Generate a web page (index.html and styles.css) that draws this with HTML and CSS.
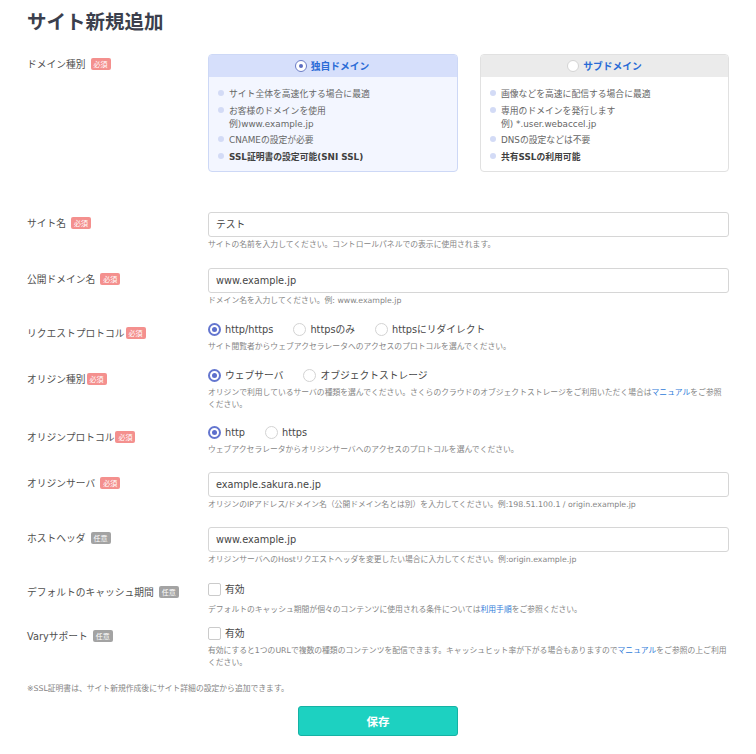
FILE: index.html
```html
<!DOCTYPE html>
<html lang="ja">
<head>
<meta charset="utf-8">
<title>サイト新規追加</title>
<link rel="stylesheet" href="styles.css">
</head>
<body>
<div class="page">
  <h1 class="title">サイト新規追加</h1>

  <div class="row row-domain">
    <div class="label label-tight">ドメイン種別<span class="badge req">必須</span></div>
    <div class="field">
      <div class="cards">
        <div class="card card-on">
          <div class="card-head"><span class="hradio on"></span>独自ドメイン</div>
          <ul class="card-list">
            <li>サイト全体を高速化する場合に最適</li>
            <li>お客様のドメインを使用<br>例)www.example.jp</li>
            <li>CNAMEの設定が必要</li>
            <li class="strong">SSL証明書の設定可能(SNI SSL)</li>
          </ul>
        </div>
        <div class="card card-off">
          <div class="card-head"><span class="hradio"></span>サブドメイン</div>
          <ul class="card-list">
            <li>画像などを高速に配信する場合に最適</li>
            <li>専用のドメインを発行します<br>例) *.user.webaccel.jp</li>
            <li>DNSの設定などは不要</li>
            <li class="strong">共有SSLの利用可能</li>
          </ul>
        </div>
      </div>
    </div>
  </div>

  <div class="row row-site">
    <div class="label">サイト名<span class="badge req">必須</span></div>
    <div class="field">
      <div class="input">テスト</div>
      <p class="help">サイトの名前を入力してください。コントロールパネルでの表示に使用されます。</p>
    </div>
  </div>

  <div class="row row-pub">
    <div class="label">公開ドメイン名<span class="badge req">必須</span></div>
    <div class="field">
      <div class="input">www.example.jp</div>
      <p class="help">ドメイン名を入力してください。例: www.example.jp</p>
    </div>
  </div>

  <div class="row row-req">
    <div class="label">リクエストプロトコル<span class="badge req tight">必須</span></div>
    <div class="field">
      <div class="choices">
        <span class="choice"><span class="radio on"></span>http/https</span>
        <span class="choice"><span class="radio"></span>httpsのみ</span>
        <span class="choice"><span class="radio"></span>httpsにリダイレクト</span>
      </div>
      <p class="help help-radio">サイト閲覧者からウェブアクセラレータへのアクセスのプロトコルを選んでください。</p>
    </div>
  </div>

  <div class="row row-otype">
    <div class="label">オリジン種別<span class="badge req tight">必須</span></div>
    <div class="field">
      <div class="choices">
        <span class="choice"><span class="radio on"></span>ウェブサーバ</span>
        <span class="choice"><span class="radio"></span>オブジェクトストレージ</span>
      </div>
      <p class="help help-radio">オリジンで利用しているサーバの種類を選んでください。さくらのクラウドのオブジェクトストレージをご利用いただく場合は<a class="link">マニュアル</a>をご参照<br>ください。</p>
    </div>
  </div>

  <div class="row row-oproto">
    <div class="label label-low">オリジンプロトコル<span class="badge req tight">必須</span></div>
    <div class="field">
      <div class="choices">
        <span class="choice"><span class="radio on"></span>http</span>
        <span class="choice"><span class="radio"></span>https</span>
      </div>
      <p class="help help-radio">ウェブアクセラレータからオリジンサーバへのアクセスのプロトコルを選んでください。</p>
    </div>
  </div>

  <div class="row row-oserver">
    <div class="label">オリジンサーバ<span class="badge req">必須</span></div>
    <div class="field">
      <div class="input">example.sakura.ne.jp</div>
      <p class="help">オリジンのIPアドレス/ドメイン名（公開ドメイン名とは別）を入力してください。例:198.51.100.1 / origin.example.jp</p>
    </div>
  </div>

  <div class="row row-host">
    <div class="label">ホストヘッダ<span class="badge opt">任意</span></div>
    <div class="field">
      <div class="input">www.example.jp</div>
      <p class="help">オリジンサーバへのHostリクエストヘッダを変更したい場合に入力してください。例:origin.example.jp</p>
    </div>
  </div>

  <div class="row row-cache">
    <div class="label label-tight">デフォルトのキャッシュ期間<span class="badge opt">任意</span></div>
    <div class="field">
      <div class="choices">
        <span class="choice"><span class="check"></span>有効</span>
      </div>
      <p class="help help-check">デフォルトのキャッシュ期間が個々のコンテンツに使用される条件については<a class="link">利用手順</a>をご参照ください。</p>
    </div>
  </div>

  <div class="row row-vary">
    <div class="label label-tight">Varyサポート<span class="badge opt">任意</span></div>
    <div class="field">
      <div class="choices">
        <span class="choice"><span class="check"></span>有効</span>
      </div>
      <p class="help help-radio">有効にすると1つのURLで複数の種類のコンテンツを配信できます。キャッシュヒット率が下がる場合もありますので<a class="link">マニュアル</a>をご参照の上ご利用<br>ください。</p>
    </div>
  </div>

  <p class="note">※SSL証明書は、サイト新規作成後にサイト詳細の設定から追加できます。</p>

  <div class="actions">
    <button class="save" type="button">保存</button>
  </div>
</div>
</body>
</html>
```

FILE: styles.css
```css
* { box-sizing: border-box; }

html, body {
  margin: 0;
  padding: 0;
  background: #ffffff;
}

body {
  font-family: "DejaVu Sans", "Noto Sans CJK JP", sans-serif;
  font-size: 9.75px;
  color: #4a4a4a;
}

.page {
  width: 756px;
  padding: 9px 27px 0 27px;
}

.title {
  margin: 0 0 21px 0;
  font-family: "Noto Sans CJK JP", sans-serif;
  font-size: 19.5px;
  line-height: 24px;
  font-weight: 700;
  color: #3b3f4d;
}

.row {
  display: grid;
  grid-template-columns: 181px 521px;
  align-items: start;
}

.row-domain { margin-bottom: 40px; }
.row-site { margin-bottom: 17px; }
.row-pub { margin-bottom: 15px; }
.row-req { margin-bottom: 15px; }
.row-otype { margin-bottom: 14px; }
.row-oproto { margin-bottom: 16px; }
.row-oserver { margin-bottom: 16px; }
.row-host { margin-bottom: 16px; }
.row-cache { margin-bottom: 10px; }
.row-vary { margin-bottom: 14px; }

.label {
  display: flex;
  align-items: center;
  height: 14px;
  margin-top: 4px;
  white-space: nowrap;
  color: #4f4f4f;
}
.label-tight { margin-top: 3px; }
.label-low { margin-top: 5px; }

.badge {
  display: inline-block;
  margin-left: 5px;
  width: 20px;
  height: 12px;
  line-height: 12px;
  border-radius: 2px;
  font-family: "Noto Sans CJK JP", sans-serif;
  font-size: 7px;
  text-align: center;
  color: #ffffff;
}
.badge.tight { margin-left: 1px; }
.badge.req { background: #f4908e; }
.badge.opt { background: #a3a3a3; }

/* domain cards */
.cards {
  display: grid;
  grid-template-columns: 250px 249px;
  column-gap: 22px;
}

.card {
  border: 1px solid #e1e1e1;
  border-radius: 4px;
  overflow: hidden;
  height: 118px;
}
.card-on {
  border-color: #cdd8f6;
  background: #f3f6ff;
}
.card-off {
  background: #ffffff;
}

.card-head {
  height: 22px;
  display: flex;
  align-items: center;
  justify-content: center;
  gap: 4px;
  font-family: "Noto Sans CJK JP", sans-serif;
  font-size: 9.75px;
  font-weight: 700;
  color: #2a6bd6;
}
.card-on .card-head { background: #d6dffb; padding-right: 2px; }
.card-off .card-head { background: #ebebeb; }

.hradio {
  width: 12px;
  height: 12px;
  border-radius: 50%;
  border: 1px solid #d4d4d4;
  background: #ffffff;
  position: relative;
}
.hradio.on {
  border: 1.5px solid #6b7cc6;
}
.hradio.on::after {
  content: "";
  position: absolute;
  left: 50%;
  top: 50%;
  width: 4px;
  height: 4px;
  margin: -2px 0 0 -2px;
  border-radius: 50%;
  background: #5c6cc0;
}

.card-list {
  list-style: none;
  margin: 0;
  padding: 11px 6px 0 9px;
  font-size: 8.8px;
  line-height: 13px;
  color: #666666;
}
.card-list li {
  position: relative;
  padding-left: 11px;
  margin-bottom: 3.5px;
}
.card-list li::before {
  content: "";
  position: absolute;
  left: 0;
  top: 2px;
  width: 6px;
  height: 6px;
  border-radius: 50%;
  background: #d3dbf6;
}
.card-list li.strong {
  font-weight: 700;
  color: #404040;
}

/* inputs */
.input {
  height: 25px;
  line-height: 23px;
  border: 1px solid #d6d6d6;
  border-radius: 3px;
  padding: 0 7px;
  color: #454545;
  font-size: 9.75px;
  background: #ffffff;
}

.help {
  margin: 2px 0 0 0;
  font-size: 7.8px;
  line-height: 12px;
  color: #858585;
}
.help-radio { margin-top: 5px; }
.help-check { margin-top: 8px; }

.link { color: #2f7bd9; }

/* radios / checkboxes */
.choices {
  display: flex;
  align-items: center;
  height: 14px;
  gap: 20px;
}
.choice {
  display: flex;
  align-items: center;
  gap: 4px;
  color: #474747;
  white-space: nowrap;
}

.radio {
  width: 13px;
  height: 13px;
  border-radius: 50%;
  border: 1.5px solid #d3d3d3;
  background: #ffffff;
  position: relative;
  flex: none;
}
.radio.on {
  border: 2px solid #6476cf;
}
.radio.on::after {
  content: "";
  position: absolute;
  left: 50%;
  top: 50%;
  width: 5px;
  height: 5px;
  margin: -2.5px 0 0 -2.5px;
  border-radius: 50%;
  background: #5d6fcc;
}

.check {
  width: 13px;
  height: 13px;
  border: 1px solid #cbcbcb;
  border-radius: 2px;
  background: #ffffff;
  flex: none;
}

.note {
  margin: 0 0 11px 0;
  font-size: 7.8px;
  line-height: 12px;
  color: #858585;
}

.actions {
  display: flex;
  justify-content: center;
}

.save {
  width: 160px;
  height: 30px;
  border: 1px solid #15b2a4;
  border-radius: 3px;
  background: #1dd1c1;
  color: #ffffff;
  font-family: "Noto Sans CJK JP", sans-serif;
  font-size: 11.5px;
  font-weight: 700;
  padding: 0;
}
```
